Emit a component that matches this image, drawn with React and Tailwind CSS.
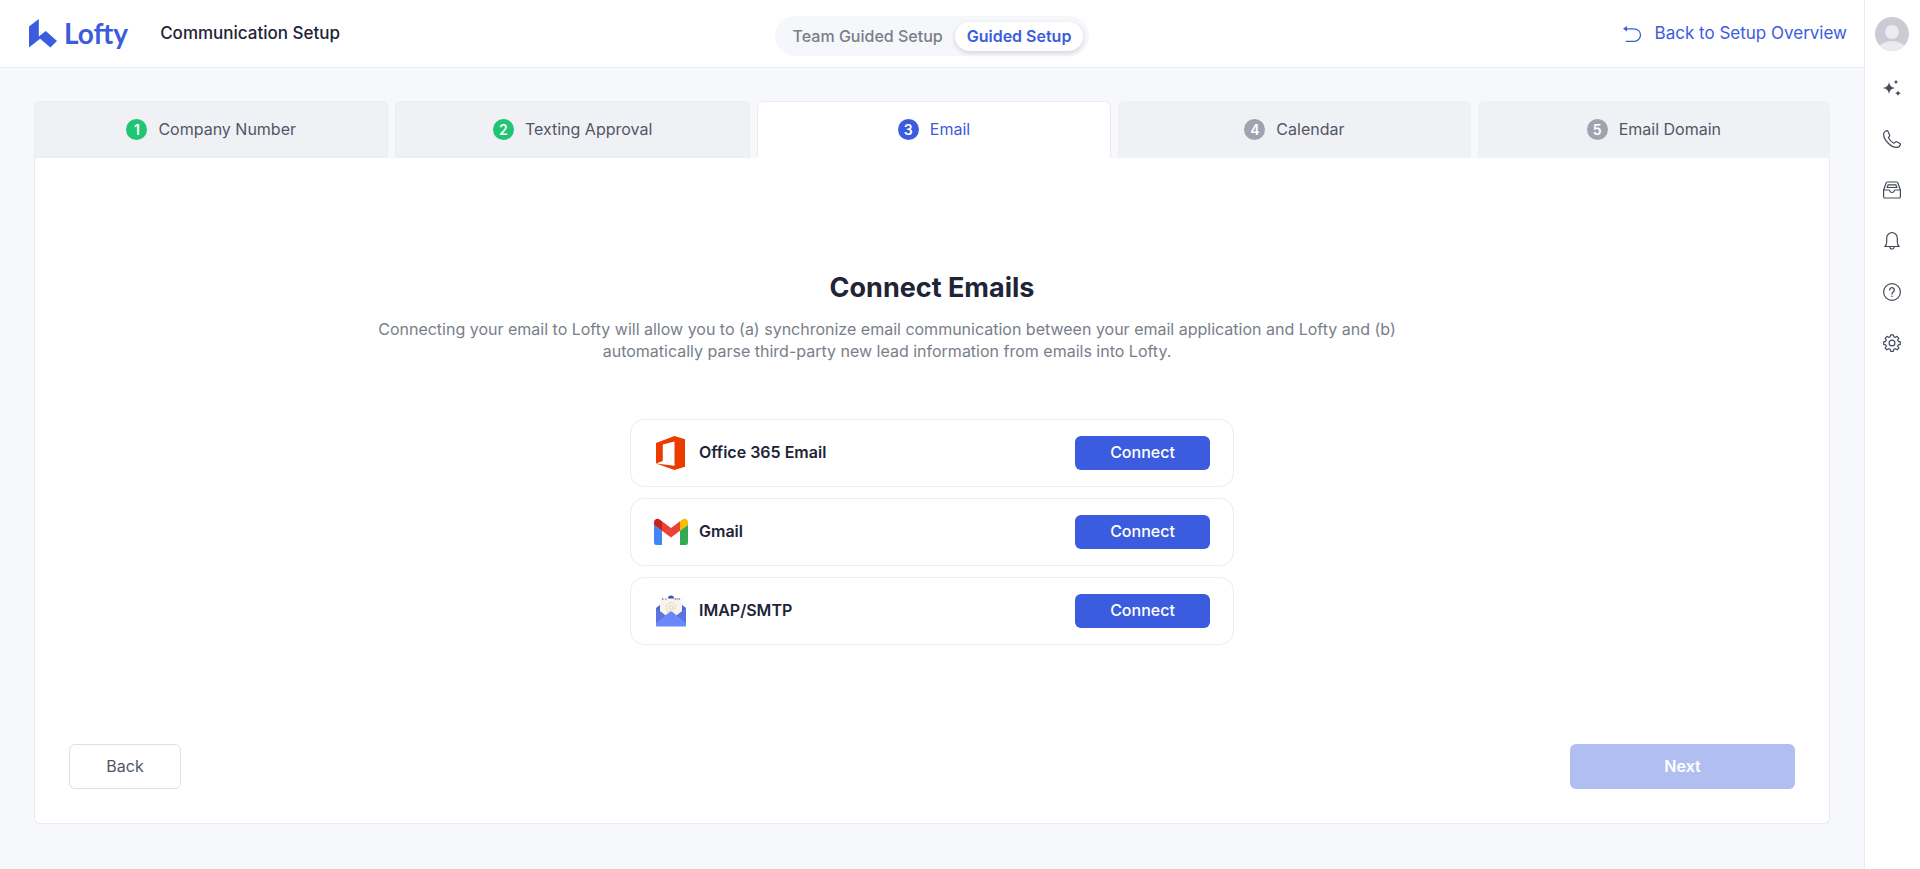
import React, { useState } from 'react';
import clsx from 'clsx';

const STEPS = [
  { label: 'Company Number', status: 'done' },
  { label: 'Texting Approval', status: 'done' },
  { label: 'Email', status: 'active' },
  { label: 'Calendar', status: 'todo' },
  { label: 'Email Domain', status: 'todo' },
];

const LogoMark = () => (
  <svg width="28" height="29" viewBox="0 0 28 29" fill="#3b5cde" aria-hidden="true">
    <path d="M0 7.5 9.8 0v17.6l7-5.6L28 22l-6.6 6.6-10.3-8.8L0 28.6Z" />
  </svg>
);

const ReturnIcon = () => (
  <svg width="18" height="16" viewBox="0 0 18 16" fill="none" stroke="#3b5cde" strokeWidth="1.2" aria-hidden="true">
    <path d="M3 2.8h8.2a6.2 6.2 0 0 1 0 12.5H3.2" strokeLinecap="round" />
    <path d="M0 2.8 4 0v5.6Z" fill="#3b5cde" stroke="none" />
  </svg>
);

const OfficeIcon = () => (
  <svg width="34" height="34" viewBox="0 0 34 34" aria-hidden="true">
    <path d="M2 27.5V7L20.5 0 31 3.2v27.6L20.5 34 2 27.5l18.5 2.3V5.6L8.8 8.5v16.4Z" fill="#eb3c00" />
  </svg>
);

const GmailIcon = () => (
  <svg width="34" height="34" viewBox="0 0 34 34" aria-hidden="true">
    <path d="M2.3 30H8V15.5L0 9.7v18A2.3 2.3 0 0 0 2.3 30Z" fill="#4285f4" />
    <path d="M26 30h5.7a2.3 2.3 0 0 0 2.3-2.3v-18l-8 5.8Z" fill="#34a853" />
    <path d="M26 6.2v9.6l8-6V7.4c0-3-3.3-4.6-5.6-2.9Z" fill="#fbbc04" />
    <path d="M8 15.8V6.2l9 6.8 9-6.8v9.6L17 22.6Z" fill="#ea4335" />
    <path d="M0 7.4v2.4l8 6V6.2L5.6 4.5C3.3 2.8 0 4.4 0 7.4Z" fill="#c5221f" />
  </svg>
);

const MailIcon = () => (
  <svg width="34" height="34" viewBox="0 0 34 34" aria-hidden="true">
    <path d="M2 14 7 10h20l5 4v16H2Z" fill="#4d68cf" />
    <path d="M6 4.5h22V20l-11 6-11-6Z" fill="#f7f4ec" />
    <path d="M14 4.5a3 3 0 0 1 6 0Z" fill="#3853b4" />
    <path d="M8 5h1.5M24.500 5H26M20.500 5h1.500" stroke="#6d86e8" strokeWidth="1.5" />
    <path d="M11 5h1.5M22.500 5H24" stroke="#e58a7a" strokeWidth="1.5" />
    <circle cx="17" cy="13.5" r="1.9" fill="none" stroke="#e9d9bd" strokeWidth="1" />
    <path d="M18.9 11.5v2.7c0 1.6 3 1.600 3-.7a4.900 4.900 0 1 0-2.400 4.200" fill="none" stroke="#e9d9bd" strokeWidth="1" />
    <path d="M2 14l11 8.500L2 31Z" fill="#5a74dc" />
    <path d="M32 14l-11 8.500L32 31Z" fill="#5a74dc" />
    <path d="M2 31.500v-2.500l13.500-11a2.300 2.300 0 0 1 3 0L32 29v2.500a1 1 0 0 1-1 1H3a1 1 0 0 1-1-1Z" fill="#6b88fb" />
  </svg>
);

const Avatar = () => (
  <svg width="34" height="34" viewBox="0 0 34 34" aria-hidden="true">
    <clipPath id="avatar-clip">
      <circle cx="17" cy="17" r="17" />
    </clipPath>
    <g clipPath="url(#avatar-clip)">
      <path d="M0 0h34v34H0z" fill="#cbcbd6" />
      <circle cx="17" cy="15" r="7" fill="#ebebef" />
      <ellipse cx="17" cy="34" rx="14.5" ry="10" fill="#ebebef" />
    </g>
  </svg>
);

const SidebarIcon = ({ children }) => (
  <svg
    width="18"
    height="18"
    viewBox="0 0 18 18"
    fill="none"
    stroke="#454a5b"
    strokeWidth="1.2"
    strokeLinecap="round"
    strokeLinejoin="round"
    aria-hidden="true"
  >
    {children}
  </svg>
);

const TOOLS = [
  {
    name: 'AI Assistant',
    icon: (
      <g fill="#454a5b" stroke="none">
        <path d="M6 3c.8 3.8 1.9 5 6 6-4.1 1-5.2 2.2-6 6-.8-3.8-1.9-5-6-6 4.1-1 5.2-2.2 6-6Z" />
        <path d="M13 .6c.4 1.7.9 2.1 2.6 2.5-1.7.4-2.2.8-2.6 2.5-.4-1.7-.9-2.1-2.6-2.5 1.7-.4 2.2-.8 2.6-2.5Z" />
        <path d="M15 11.3c.5 1.9 1 2.5 3 3-2 .5-2.5 1.100-3 3-.5-1.900-1-2.500-3-3 2-.5 2.500-1.100 3-3Z" />
      </g>
    ),
  },
  {
    name: 'Dialer',
    icon: (
      <path d="M3.800.7C2.500.9.6 2.300.6 4.200c0 5.800 7.600 13.200 12.600 13.200 2.200 0 3.700-1.200 4.200-2.700.2-.6 0-1-.5-1.300l-3-1.700c-.5-.3-1-.2-1.400.2l-1 1c-.3.300-.7.300-1 .1-1.800-1-3.900-3.200-4.900-5-.2-.4-.1-.7.2-1l.7-.8c.3-.4.300-.8.1-1.300L4.900 1.300c-.2-.4-.6-.7-1.100-.6Z" />
    ),
  },
  {
    name: 'Inbox',
    icon: (
      <>
        <path d="M.6 9 3 2.200C3.300 1.300 3.800 1 4.600 1h8.800c.8 0 1.300.3 1.600 1.200L17.400 9v6.700c0 .8-.5 1.300-1.300 1.300H1.900c-.8 0-1.300-.5-1.300-1.300Z" />
        <path d="M.6 9h5.200c.4 0 .7.300.8.7.3 1.100 1.200 1.800 2.400 1.800s2.100-.7 2.400-1.800c.1-.4.4-.7.8-.7h5.200" />
        <path d="M4.300 6.500 5 3.800h8l.7 2.700M4 6.500h10" />
      </>
    ),
  },
  {
    name: 'Notifications',
    icon: (
      <>
        <path d="M1.800 14.500c1.400-1.300 1.900-2.400 1.900-4.500V6a5.300 5.300 0 0 1 10.600 0v4c0 2.100.5 3.200 1.900 4.500Z" />
        <path d="M6.800 14.800a2.200 2.200 0 0 0 4.400 0" />
      </>
    ),
  },
  {
    name: 'Help',
    icon: (
      <>
        <circle cx="9" cy="9" r="8.4" />
        <path d="M6.700 7a2.300 2.300 0 1 1 3.800 1.700c-.9.700-1.500 1.100-1.500 2.300" strokeWidth="1.3" />
        <circle cx="9" cy="13.2" r=".8" fill="#454a5b" stroke="none" />
      </>
    ),
  },
  {
    name: 'Settings',
    icon: (
      <>
        <circle cx="9" cy="9" r="2.9" />
        <path d="M7.700.8h2.600l.5 2 1.400.6 1.800-1.100 1.800 1.800-1.100 1.800.6 1.400 2 .5v2.500l-2 .5-.6 1.400 1.100 1.800-1.800 1.800-1.800-1.100-1.400.6-.5 2H7.700l-.5-2-1.400-.6L4 15.800 2.200 14l1.100-1.800-.6-1.400-2-.5V7.800l2-.5.6-1.400L2.200 4.100 4 2.300l1.800 1.100 1.400-.6Z" />
      </>
    ),
  },
];

const PROVIDERS = [
  { name: 'Office 365 Email', Icon: OfficeIcon },
  { name: 'Gmail', Icon: GmailIcon },
  { name: 'IMAP/SMTP', Icon: MailIcon },
];

const ModeToggle = () => {
  const [mode, setMode] = useState('Guided Setup');

  return (
    <div className="mt-[5px] flex h-10 items-center rounded-full bg-[#f6f7fb] px-[6px]">
      {['Team Guided Setup', 'Guided Setup'].map((option) => (
        <button
          key={option}
          type="button"
          onClick={() => setMode(option)}
          className={clsx(
            'h-[29px] rounded-full px-3 pb-px whitespace-nowrap',
            mode === option
              ? 'bg-white font-semibold text-[#3b5cde] shadow-[0_2px_5px_rgba(0,10,30,0.15)]'
              : 'font-medium text-[#797e8b]'
          )}
        >
          {option}
        </button>
      ))}
    </div>
  );
};

const Header = () => (
  <header className="grid h-[68px] grid-cols-[1fr_auto_1fr] items-center border-b border-[#e9eaf0] bg-white px-[17px]">
    <div className="flex items-center pl-3">
      <a href="#home" className="flex items-center gap-[7px]">
        <LogoMark />
        <span className="pb-[2px] font-[Lato,sans-serif] text-[28px] leading-8 font-bold text-[#3b5cde]">Lofty</span>
      </a>
      <h1 className="ml-8 text-[17px] font-medium text-[#202437]">Communication Setup</h1>
    </div>
    <ModeToggle />
    <a href="#overview" className="flex items-center gap-[14px] justify-self-end text-[17px] text-[#3b5cde]">
      <ReturnIcon />
      Back to Setup Overview
    </a>
  </header>
);

const StepTabs = () => (
  <nav className="flex gap-[7px]">
    {STEPS.map(({ label, status }, index) => (
      <button
        key={label}
        type="button"
        aria-current={status === 'active' ? 'step' : undefined}
        className={clsx(
          'flex h-[57px] flex-1 items-center justify-center gap-[11px] rounded-t-md',
          status === 'active' && 'border border-[#ebecf1] border-b-white bg-white text-[#3b5cde]',
          status === 'done' && 'border border-[#ebecf1] bg-[#f0f1f5] text-[#515666]',
          status === 'todo' && 'bg-[#f0f1f5] text-[#515666]'
        )}
      >
        <span
          className={clsx(
            'flex size-[21px] items-center justify-center rounded-full text-sm font-semibold text-white',
            status === 'active' && 'bg-[#3b5cde]',
            status === 'done' && 'bg-[#20c472]',
            status === 'todo' && 'bg-[#a0a3af]'
          )}
        >
          {index + 1}
        </span>
        <span className="pb-[2px]">{label}</span>
      </button>
    ))}
  </nav>
);

const ProviderRow = ({ name, Icon }) => (
  <li className="flex h-[68px] items-center rounded-[14px] border border-[#ebecf1] px-[23px]">
    <Icon />
    <span className="ml-[11px] pb-[2px] font-semibold text-[#202437]">{name}</span>
    <button
      type="button"
      aria-label={`Connect ${name}`}
      className="ml-auto h-[34px] w-[135px] rounded-md bg-[#3b5cde] pb-[2px] font-medium text-white"
    >
      Connect
    </button>
  </li>
);

const Sidebar = () => (
  <aside className="flex w-14 shrink-0 flex-col items-center border-l border-[#e9eaf0] bg-white pt-[17px] pr-px">
    <button type="button" aria-label="Account">
      <Avatar />
    </button>
    <div className="mt-7 flex flex-col gap-[33px]">
      {TOOLS.map(({ name, icon }) => (
        <button key={name} type="button" aria-label={name}>
          <SidebarIcon>{icon}</SidebarIcon>
        </button>
      ))}
    </div>
  </aside>
);

const App = () => (
  <div className="flex min-h-screen bg-[#f6f8fc] font-[Inter,sans-serif] text-base text-[#515666]">
    <div className="flex min-w-0 flex-1 flex-col">
      <Header />
      <main className="flex flex-1 flex-col px-[34px] pt-[33px] pb-[45px]">
        <StepTabs />
        <section className="flex flex-1 flex-col rounded-b-md border border-t-0 border-[#e9eaf0] bg-white px-[34px] pt-[113px] pb-[34px]">
          <div className="flex flex-col items-center">
            <h2 className="text-[27px] leading-[34px] font-bold text-[#202437]">Connect Emails</h2>
            <p className="mt-[13px] mr-[90px] max-w-[1040px] text-center leading-[22px] text-[#797e8b]">
              Connecting your email to Lofty will allow you to (a) synchronize email communication between your email
              application and Lofty and (b) automatically parse third-party new lead information from emails into Lofty.
            </p>
            <ul className="mt-[57px] flex w-full max-w-[604px] flex-col gap-[11px]">
              {PROVIDERS.map((provider) => (
                <ProviderRow key={provider.name} {...provider} />
              ))}
            </ul>
          </div>
          <div className="mt-auto flex justify-between pt-10">
            <button type="button" className="h-[45px] w-28 rounded-md border border-[#e0e1e7] bg-white pb-[2px]">
              Back
            </button>
            <button
              type="button"
              disabled
              className="h-[45px] w-[225px] rounded-md bg-[#b1bef2] pb-[2px] font-semibold text-white"
            >
              Next
            </button>
          </div>
        </section>
      </main>
    </div>
    <Sidebar />
  </div>
);

export default App;
